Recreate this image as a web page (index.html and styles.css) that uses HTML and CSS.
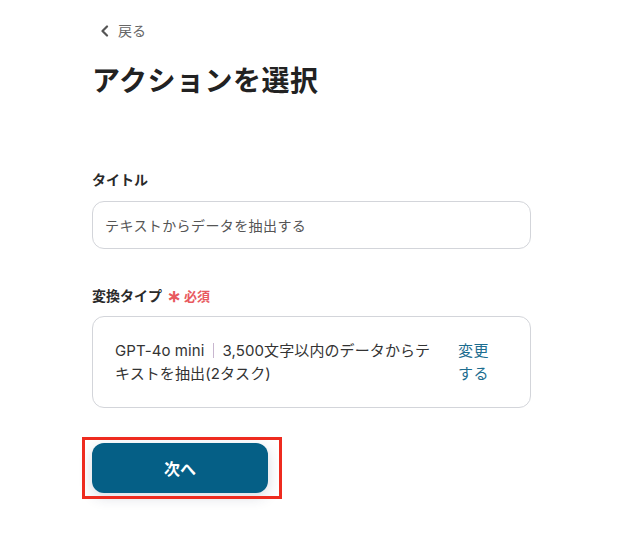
FILE: index.html
```html
<!DOCTYPE html>
<html lang="ja">
<head>
<meta charset="utf-8">
<link rel="stylesheet" href="styles.css">
</head>
<body>
<div class="page">
  <a class="back" href="#">
    <svg class="chev" width="10" height="12" viewBox="0 0 10 12"><path d="M7 1.5 L2.5 6 L7 10.5" fill="none" stroke="#555" stroke-width="2.2" stroke-linecap="round" stroke-linejoin="round"/></svg>
    <span>戻る</span>
  </a>
  <h1 class="title">アクションを選択</h1>

  <div class="field first">
    <div class="label">タイトル</div>
    <div class="input">テキストからデータを抽出する</div>
  </div>

  <div class="field second">
    <div class="label">変換タイプ<span class="req"><span class="ast">∗</span>必須</span></div>
    <div class="select">
      <div class="desc">GPT-4o mini<span class="sep"></span>3,500文字以内のデータからテキストを抽出(2タスク)</div>
      <a class="change" href="#">変更する</a>
    </div>
  </div>

  <div class="actions">
    <button class="next">次へ</button>
    <div class="highlight"></div>
  </div>
</div>
</body>
</html>
```

FILE: styles.css
```css
* { box-sizing: border-box; }
html, body { margin: 0; padding: 0; background: #fff; }
body {
  font-family: "Inter", "Noto Sans CJK JP", sans-serif;
  color: #2b2b2b;
}
.page {
  width: 439px;
  margin-left: 92px;
  padding-top: 21px;
  padding-bottom: 50px;
}
.back {
  display: flex;
  align-items: center;
  gap: 8px;
  padding-left: 8px;
  color: #666;
  text-decoration: none;
  font-size: 14px;
  line-height: 20px;
}
.title {
  margin: 20px 0 0;
  font-size: 28px;
  line-height: 40px;
  font-weight: 700;
  color: #222;
  letter-spacing: 0.5px;
}
.field.first { margin-top: 69px; }
.field.second { margin-top: 37px; }
.label {
  font-size: 14px;
  line-height: 20px;
  font-weight: 700;
  color: #2a2a2a;
  display: flex;
  align-items: center;
}
.req {
  color: #e8595f;
  font-size: 13px;
  margin-left: 5px;
  display: flex;
  align-items: center;
}
.ast { font-size: 17px; font-weight: 700; margin-right: 3px; }
.input {
  margin-top: 11px;
  height: 48px;
  border: 1px solid #d3d5da;
  border-radius: 12px;
  padding: 0 12px;
  display: flex;
  align-items: center;
  font-size: 14px;
  color: #555;
  letter-spacing: 0.4px;
}
.select {
  margin-top: 10px;
  height: 92px;
  border: 1px solid #d3d5da;
  border-radius: 12px;
  padding: 0 40px 0 22px;
  display: flex;
  align-items: center;
  gap: 18px;
}
.desc {
  flex: 1;
  font-size: 15px;
  line-height: 23px;
  color: #333;
  letter-spacing: 0.1px;
}
.sep {
  display: inline-block;
  width: 1px;
  height: 15px;
  background: #c8b6cf;
  margin: 0 9px 0 8px;
  vertical-align: -2px;
}
.change {
  width: 32px;
  font-size: 15px;
  line-height: 23px;
  color: #1d6d8f;
  text-decoration: none;
  letter-spacing: 0.5px;
}
.actions {
  position: relative;
  margin-top: 35px;
  width: 176px;
}
.next {
  display: block;
  width: 176px;
  height: 50px;
  border: none;
  border-radius: 12px;
  background: #055f86;
  color: #fff;
  font-family: inherit;
  font-size: 16px;
  font-weight: 700;
  box-shadow: 0 4px 14px rgba(40, 50, 90, 0.18);
}
.highlight {
  position: absolute;
  left: -10px;
  top: -6px;
  width: 200px;
  height: 62px;
  border: 3px solid #ee2b1f;
}
```
